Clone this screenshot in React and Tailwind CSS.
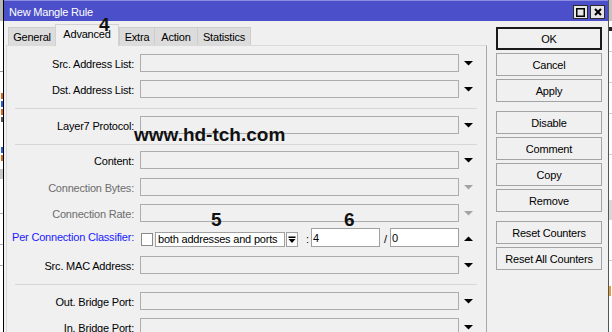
import React from "react";

function Tri({ up = false, color = "#000" }) {
  return (
    <svg width="9" height="5" viewBox="0 0 9 5" className="block">
      {up ? (
        <polygon points="0,5 9,5 4.5,0.5" fill={color} />
      ) : (
        <polygon points="0,0 9,0 4.5,4.5" fill={color} />
      )}
    </svg>
  );
}

function Field({ label, labelClass = "text-black", mt, arrowColor = "#000" }) {
  return (
    <div className={"flex h-[18px] shrink-0 " + mt}>
      <div className={"w-[127px] shrink-0 text-right pt-[3px] leading-[15px] whitespace-nowrap " + labelClass}>
        {label}
      </div>
      <div className="ml-[6px] w-[319px] h-[18px] shrink-0 border border-[#adadad] bg-[#f0f0f0]" />
      <div className="ml-[4px] w-[10px] shrink-0 flex items-center justify-center pt-[1px]">
        <Tri color={arrowColor} />
      </div>
    </div>
  );
}

function Sep({ mt }) {
  return <div className={"ml-[8px] w-[462px] h-px shrink-0 bg-[#d7d7d7] " + mt} />;
}

function Btn({ children, mt = "", def = false }) {
  return (
    <div
      className={
        "h-[23px] w-[106px] shrink-0 flex items-center justify-center pt-[1px] bg-[#f0f0f0] whitespace-nowrap " +
        (def ? "border-2 border-[#1a1a1a] " : "border border-[#a3a3a3] ") +
        mt
      }
    >
      {children}
    </div>
  );
}

function Tab({ children, w, active = false, last = false }) {
  if (active) {
    return (
      <div
        className={
          "relative z-10 h-[22px] -mb-px shrink-0 bg-[#f0f0f0] border border-b-0 border-[#d2d2d2] text-center pt-[2px] leading-[15px] whitespace-nowrap " +
          w
        }
      >
        {children}
      </div>
    );
  }
  return (
    <div
      className={
        "h-[18px] shrink-0 bg-[#dcdcdc] border-t border-l border-[#cdcdcd] text-center pt-[2px] leading-[15px] whitespace-nowrap " +
        (last ? "border-r " : "") +
        w
      }
    >
      {children}
    </div>
  );
}

export default function App() {
  return (
    <div className="relative w-[612px] h-[332px] overflow-hidden flex bg-white text-black text-[11px] tracking-[-0.2px] font-['Liberation_Sans',Arial,sans-serif]">
      {/* left background strip */}
      <div className="w-[3px] shrink-0 flex flex-col bg-white">
        <div className="h-[21px] bg-[#b8b8b8]" />
        <div className="mt-[50px] h-px bg-[#9a9a9a]" />
        <div className="mt-[21px] h-[6px] w-[2px] ml-[1px] bg-[#d2691e]" />
        <div className="mt-[2px] h-[6px] w-[2px] ml-[1px] bg-[#2a5bd7]" />
        <div className="mt-[2px] h-[6px] w-[2px] ml-[1px] bg-[#d2691e]" />
        <div className="mt-[2px] h-[5px] w-[2px] ml-[1px] bg-[#555]" />
        <div className="mt-[25px] h-[6px] w-[2px] ml-[1px] bg-[#2a5bd7]" />
        <div className="mt-[2px] h-[6px] w-[2px] ml-[1px] bg-[#d2691e]" />
        <div className="mt-[8px] h-[10px] bg-[#c8c8c8]" />
        <div className="mt-[34px] h-px bg-[#b0b0b0]" />
        <div className="mt-[30px] h-px bg-[#b0b0b0]" />
        <div className="mt-[20px] h-px bg-[#b0b0b0]" />
      </div>
      <div className="w-px shrink-0 bg-black" />

      {/* dialog */}
      <div className="w-[604px] shrink-0 flex flex-col bg-[#f0f0f0]">
        {/* title bar */}
        <div className="h-[21px] shrink-0 flex items-start bg-[#4b4fc9] border-t border-[#8a8de0]">
          <div className="pl-[5px] pt-[5px] leading-[13px] text-white whitespace-nowrap">New Mangle Rule</div>
          <div className="ml-auto mt-[4px] mr-[3px] flex gap-[2px]">
            <div className="w-[15px] h-[14px] bg-[#e6e6e6] border border-[#2a2a2a] flex items-center justify-center">
              <svg width="9" height="9" viewBox="0 0 9 9" className="block">
                <rect x="0.75" y="0.75" width="7.5" height="7.5" fill="none" stroke="#000" strokeWidth="1.5" />
              </svg>
            </div>
            <div className="w-[15px] h-[14px] bg-[#e6e6e6] border border-[#2a2a2a] flex items-center justify-center">
              <svg width="8" height="8" viewBox="0 0 8 8" className="block">
                <path d="M1 1L7 7M7 1L1 7" stroke="#000" strokeWidth="2" />
              </svg>
            </div>
          </div>
        </div>

        {/* body */}
        <div className="flex-1 flex">
          {/* left column */}
          <div className="w-[483px] shrink-0 pl-[2px] flex flex-col">
            <div className="h-[24px] shrink-0 flex items-end pl-[2px]">
              <Tab w="w-[47px]">General</Tab>
              <Tab w="w-[64px]" active>
                Advanced
              </Tab>
              <Tab w="w-[35px]">Extra</Tab>
              <Tab w="w-[43px]">Action</Tab>
              <Tab w="w-[54px]" last>
                Statistics
              </Tab>
            </div>
            <div className="flex-1 flex flex-col border-t border-l border-r border-t-[#dadada] border-l-[#dadada] border-r-[#a8a8a8]">
              <Field label="Src. Address List:" mt="mt-[8px]" />
              <Field label="Dst. Address List:" mt="mt-[8px]" />
              <Sep mt="mt-[10px]" />
              <Field label="Layer7 Protocol:" mt="mt-[7px]" />
              <Sep mt="mt-[10px]" />
              <Field label="Content:" mt="mt-[6px]" />
              <Field label="Connection Bytes:" labelClass="text-[#6d6d6d]" arrowColor="#a3a3a3" mt="mt-[9px]" />
              <Field label="Connection Rate:" labelClass="text-[#6d6d6d]" arrowColor="#a3a3a3" mt="mt-[8px]" />

              {/* per connection classifier */}
              <div className="flex h-[19px] shrink-0 mt-[6px]">
                <div className="w-[127px] shrink-0 text-right pt-[2px] leading-[15px] whitespace-nowrap text-[#1a1aff]">
                  Per Connection Classifier:
                </div>
                <div className="ml-[7px] mt-[5px] w-[12px] h-[13px] shrink-0 bg-white border border-[#8a8a8a]" />
                <div className="ml-[2px] mt-[4px] w-[130px] h-[15px] shrink-0 bg-white border border-[#a0a0a0] pl-[2px] leading-[13px] whitespace-nowrap overflow-hidden">
                  both addresses and ports
                </div>
                <div className="ml-px mt-[4px] w-[12px] h-[15px] shrink-0 bg-[#fafafa] border border-[#a0a0a0] flex items-center justify-center">
                  <svg width="8" height="8" viewBox="0 0 8 8" className="block">
                    <rect x="0.5" y="0.5" width="7" height="1.5" fill="#000" />
                    <polygon points="0.5,3 7.5,3 4,7" fill="#000" />
                  </svg>
                </div>
                <div className="ml-[8px] w-[3px] shrink-0 pt-[4px] leading-[15px]">:</div>
                <div className="ml-[2px] w-[69px] h-[19px] shrink-0 bg-white border border-[#a0a0a0] pl-px pt-[2px] leading-[15px]">
                  4
                </div>
                <div className="ml-[4px] w-[3px] shrink-0 pt-[4px] leading-[15px]">/</div>
                <div className="ml-[3px] w-[69px] h-[19px] shrink-0 bg-white border border-[#a0a0a0] pl-px pt-[2px] leading-[15px]">
                  0
                </div>
                <div className="ml-[4px] w-[10px] shrink-0 flex items-center justify-center pt-[1px]">
                  <Tri up />
                </div>
              </div>

              <Field label="Src. MAC Address:" mt="mt-[9px]" />
              <Sep mt="mt-[10px]" />
              <Field label="Out. Bridge Port:" mt="mt-[7px]" />
              <Field label="In. Bridge Port:" mt="mt-[8px]" />
            </div>
          </div>

          {/* buttons column */}
          <div className="ml-[9px] w-[106px] shrink-0 pt-[6px] flex flex-col">
            <Btn def>OK</Btn>
            <Btn mt="mt-[3px]">Cancel</Btn>
            <Btn mt="mt-[3px]">Apply</Btn>
            <Btn mt="mt-[9px]">Disable</Btn>
            <Btn mt="mt-[3px]">Comment</Btn>
            <Btn mt="mt-[3px]">Copy</Btn>
            <Btn mt="mt-[3px]">Remove</Btn>
            <Btn mt="mt-[9px]">Reset Counters</Btn>
            <Btn mt="mt-[3px]">Reset All Counters</Btn>
          </div>
        </div>
      </div>

      {/* right background strip */}
      <div className="w-[4px] shrink-0 flex flex-col bg-white border-l border-[#555]">
        <div className="h-[21px] bg-[#c4c4c4]" />
        <div className="mt-[6px] h-[4px] w-[3px] bg-[#222]" />
        <div className="mt-[20px] h-px bg-[#d0d0d0]" />
        <div className="mt-[30px] h-px bg-[#d0d0d0]" />
        <div className="mt-[30px] h-px bg-[#d0d0d0]" />
        <div className="mt-[40px] h-px bg-[#d0d0d0]" />
        <div className="mt-[45px] h-[20px] bg-[#d8d8d8]" />
        <div className="mt-[40px] h-px bg-[#d0d0d0]" />
        <div className="mt-[25px] h-[10px] w-[2px] bg-[#e0a040]" />
      </div>

      {/* annotations overlay */}
      <div className="absolute z-20 left-[99px] top-[15px] text-[19px] leading-[19px] font-bold tracking-normal text-[#111]">4</div>
      <div className="absolute z-20 left-[134px] top-[125px] text-[19px] leading-[19px] font-bold tracking-normal text-[#111] whitespace-nowrap">
        www.hd-tch.com
      </div>
      <div className="absolute z-20 left-[211px] top-[210px] text-[19px] leading-[19px] font-bold tracking-normal text-[#111]">5</div>
      <div className="absolute z-20 left-[344px] top-[210px] text-[19px] leading-[19px] font-bold tracking-normal text-[#111]">6</div>
    </div>
  );
}
